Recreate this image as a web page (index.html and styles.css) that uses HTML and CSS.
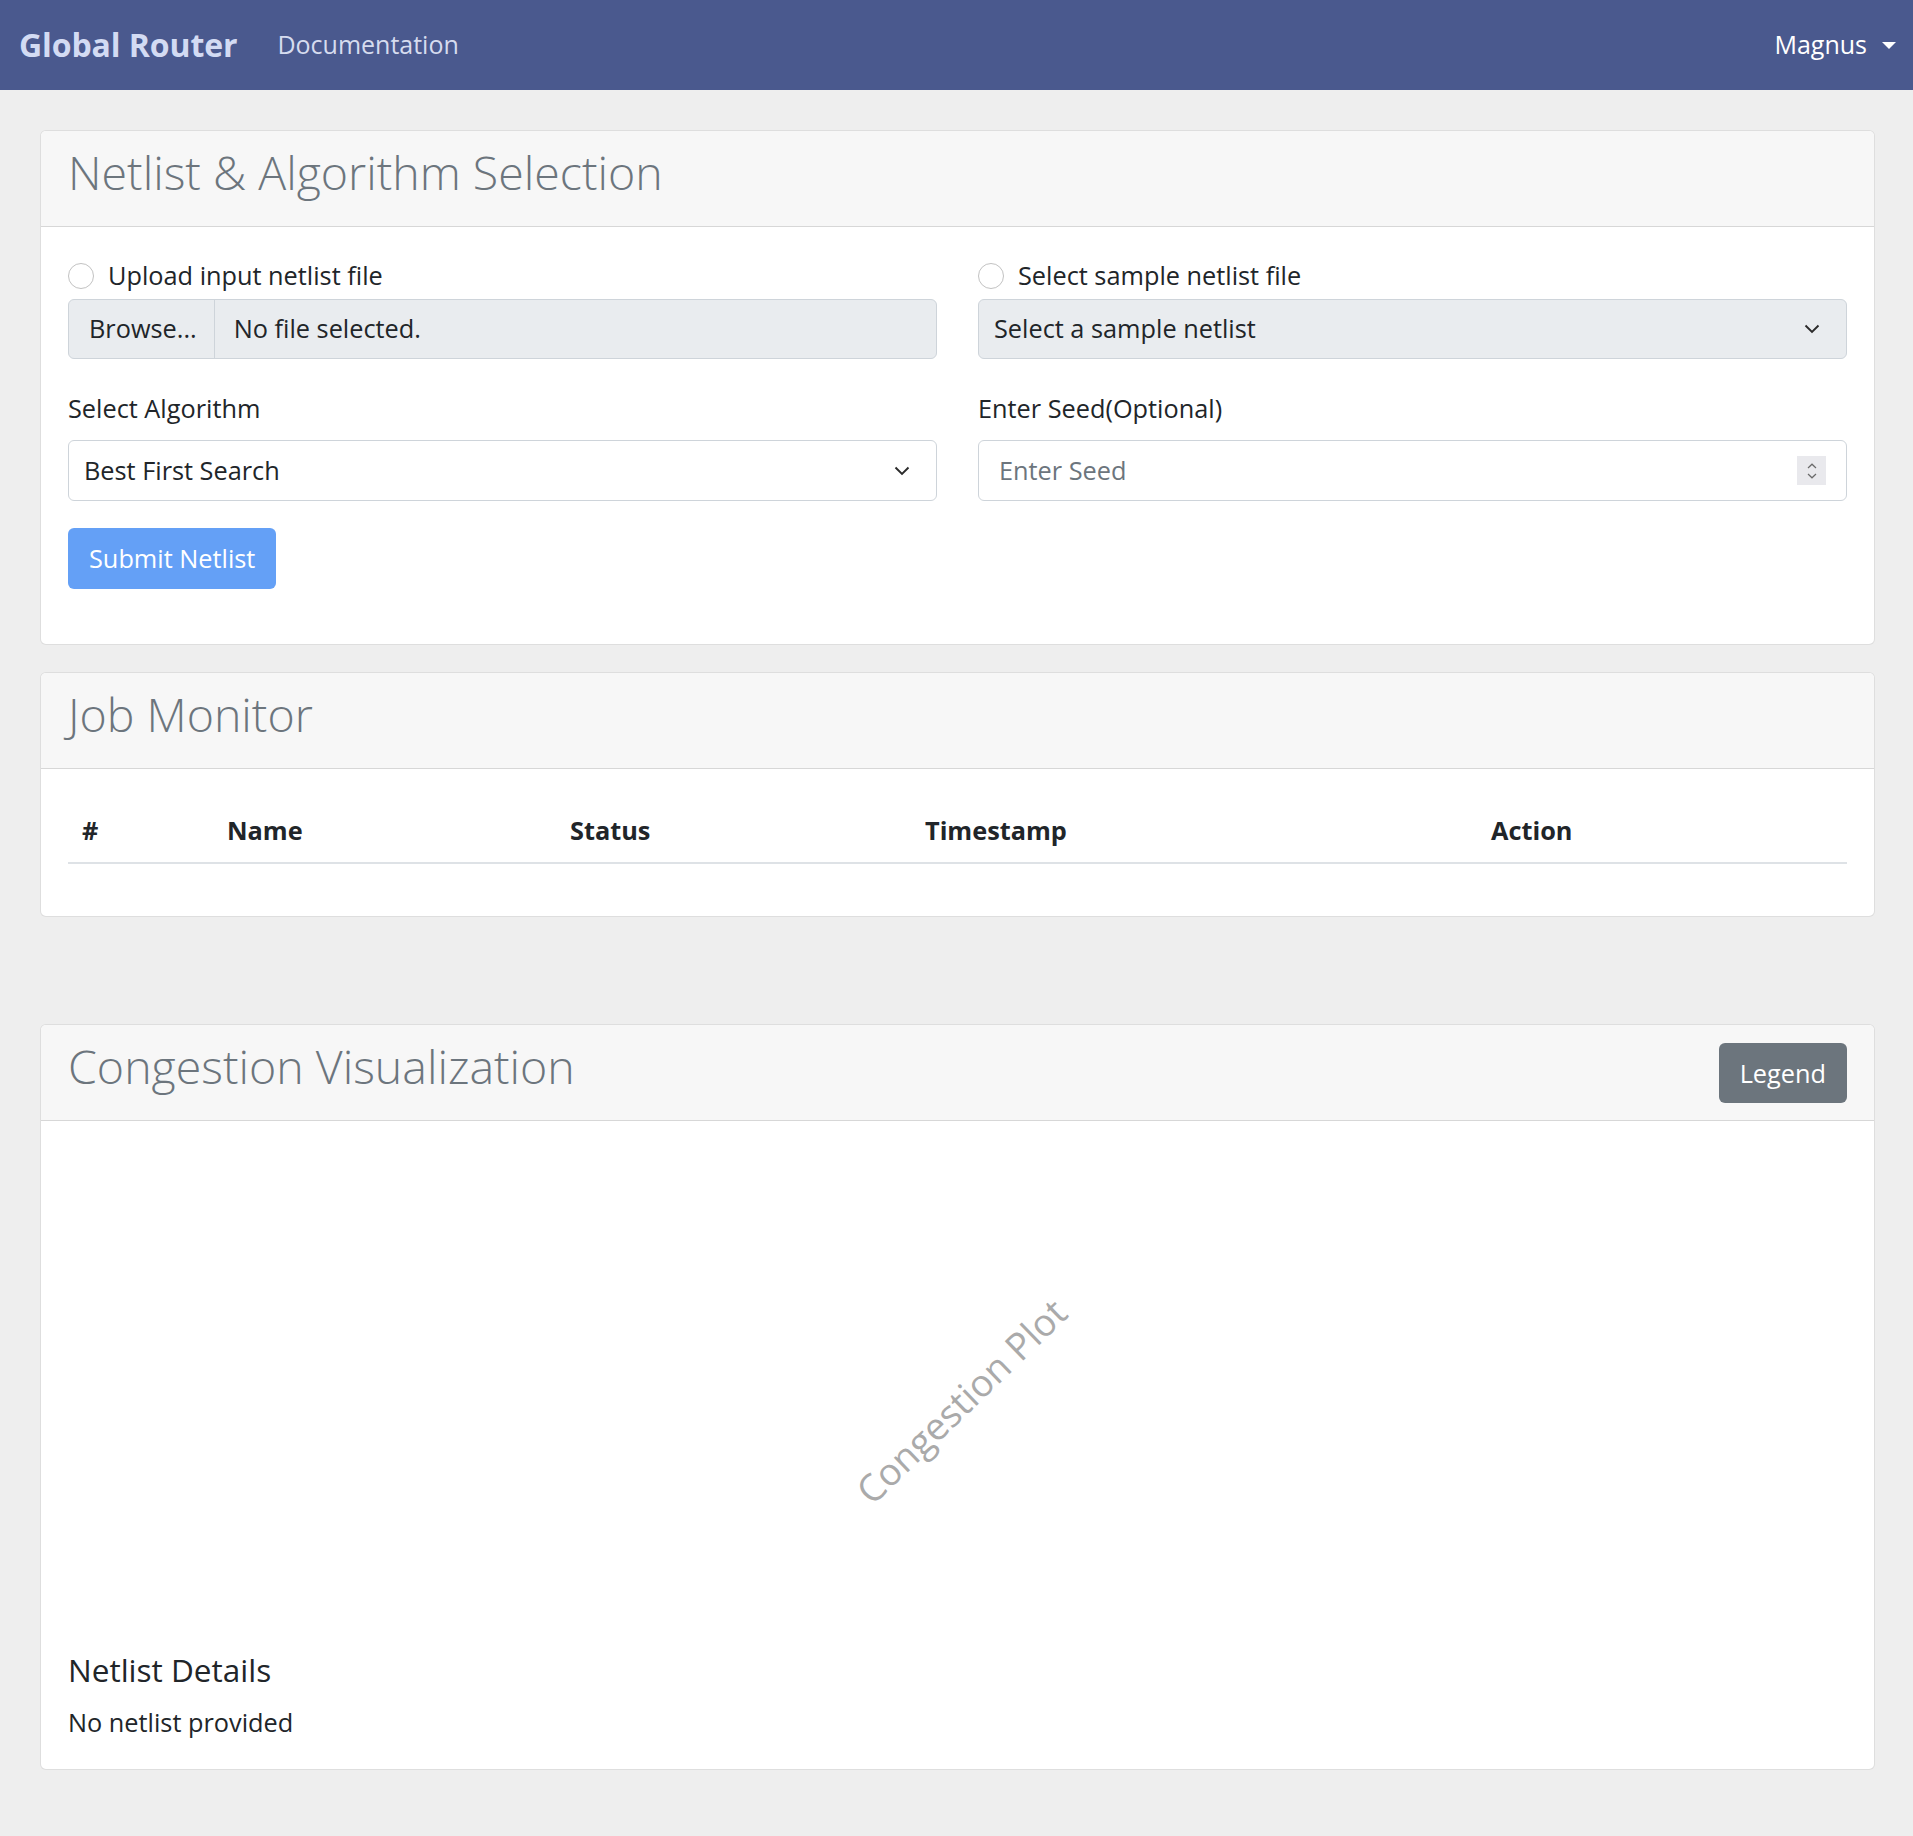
FILE: index.html
```html
<!DOCTYPE html>
<html lang="en">
<head>
<meta charset="utf-8">
<title>Global Router</title>
<link rel="stylesheet" href="styles.css">
</head>
<body>
<nav class="navbar">
  <a class="brand" href="#">Global Router</a>
  <a class="nav-link" href="#">Documentation</a>
  <div class="nav-spacer"></div>
  <a class="user-menu" href="#">Magnus<span class="caret"></span></a>
</nav>

<main class="page">
  <section class="card">
    <header class="card-header">
      <h2 class="card-title">Netlist &amp; Algorithm Selection</h2>
    </header>
    <div class="card-body">
      <form class="form-grid">
        <div class="form-col">
          <label class="radio-row"><span class="radio"></span>Upload input netlist file</label>
          <div class="file-input">
            <span class="file-btn">Browse...</span>
            <span class="file-name">No file selected.</span>
          </div>
          <label class="field-label">Select Algorithm</label>
          <div class="select">
            <span>Best First Search</span>
            <svg class="chevron" width="16" height="10" viewBox="0 0 16 10"><path d="M1.5 1.5 L8 8 L14.5 1.5" fill="none" stroke="#2b2b2b" stroke-width="1.9"/></svg>
          </div>
          <div class="actions"><button type="button" class="btn btn-submit">Submit Netlist</button></div>
        </div>
        <div class="form-col">
          <label class="radio-row"><span class="radio"></span>Select sample netlist file</label>
          <div class="select select-disabled">
            <span>Select a sample netlist</span>
            <svg class="chevron" width="16" height="10" viewBox="0 0 16 10"><path d="M1.5 1.5 L8 8 L14.5 1.5" fill="none" stroke="#2b2b2b" stroke-width="1.9"/></svg>
          </div>
          <label class="field-label">Enter Seed(Optional)</label>
          <div class="text-input">
            <span class="placeholder">Enter Seed</span>
            <span class="spinner">
              <svg width="10" height="6" viewBox="0 0 10 6"><path d="M1 5 L5 1.2 L9 5" fill="none" stroke="#6a6a6a" stroke-width="1.2"/></svg>
              <svg width="10" height="6" viewBox="0 0 10 6"><path d="M1 1 L5 4.8 L9 1" fill="none" stroke="#6a6a6a" stroke-width="1.2"/></svg>
            </span>
          </div>
        </div>
      </form>
    </div>
  </section>

  <section class="card card-jobs">
    <header class="card-header">
      <h2 class="card-title">Job Monitor</h2>
    </header>
    <div class="card-body">
      <table class="table">
        <thead>
          <tr>
            <th class="c-num">#</th>
            <th class="c-name">Name</th>
            <th class="c-status">Status</th>
            <th class="c-time">Timestamp</th>
            <th class="c-action">Action</th>
          </tr>
        </thead>
        <tbody></tbody>
      </table>
    </div>
  </section>

  <section class="card card-viz">
    <header class="card-header card-header-flex">
      <h2 class="card-title">Congestion Visualization</h2>
      <button type="button" class="btn btn-legend">Legend</button>
    </header>
    <div class="card-body">
      <div class="plot"><span class="plot-label">Congestion Plot</span></div>
      <h5 class="details-title">Netlist Details</h5>
      <p class="details-text">No netlist provided</p>
    </div>
  </section>
</main>
</body>
</html>
```

FILE: styles.css
```css
* { box-sizing: border-box; }

html, body {
  margin: 0;
  padding: 0;
}

body {
  background: #eeeeee;
  font-family: "Open Sans", "Noto Sans", "Liberation Sans", sans-serif;
  font-size: 25.3px;
  line-height: 1.5;
  color: #212529;
}

a { text-decoration: none; }

/* Navbar */
.navbar {
  height: 90px;
  background: #4a598e;
  display: flex;
  align-items: center;
  padding: 0 17px 0 19px;
}

.brand {
  font-size: 32px;
  font-weight: 700;
  color: #d3dbf3;
  letter-spacing: -0.1px;
}

.nav-link {
  margin-left: 40px;
  color: #d6dcef;
  font-size: 25px;
}

.nav-spacer { flex: 1; }

.user-menu {
  color: #ffffff;
  display: flex;
  align-items: center;
  font-size: 25px;
}

.caret {
  display: inline-block;
  margin-left: 15px;
  width: 0;
  height: 0;
  border-left: 7.5px solid transparent;
  border-right: 7.5px solid transparent;
  border-top: 7.5px solid #ffffff;
}

/* Page */
.page {
  padding: 40px 38px 40px 40px;
}

.card {
  background: #ffffff;
  border: 1px solid rgba(0, 0, 0, 0.13);
  border-radius: 6px;
  overflow: hidden;
}

.card-jobs { margin-top: 27px; }
.card-viz { margin-top: 106.5px; }

.card-header {
  background: #f7f7f7;
  border-bottom: 1px solid rgba(0, 0, 0, 0.13);
  height: 96px;
  padding: 14px 27px 0 27px;
}

.card-header-flex {
  display: flex;
  justify-content: space-between;
  align-items: flex-start;
}

.card-title {
  margin: 0;
  font-size: 46.5px;
  font-weight: 300;
  line-height: 54px;
  color: #6c757d;
}

.card-body {
  padding: 30px 27px 27px 27px;
}

/* Form */
.form-grid {
  display: grid;
  grid-template-columns: 1fr 1fr;
  column-gap: 41px;
  margin: 0 0 28px 0;
}

.form-col {
  display: flex;
  flex-direction: column;
}

.radio-row {
  display: flex;
  align-items: center;
  height: 38px;
  margin-bottom: 4px;
}

.radio {
  width: 26px;
  height: 26px;
  border-radius: 50%;
  border: 1.5px solid #c2c2c2;
  background: #fff;
  margin-right: 14px;
  flex: none;
}

.file-input {
  height: 60px;
  display: flex;
  align-items: stretch;
  background: #e9ecef;
  border: 1px solid #ced4da;
  border-radius: 6px;
}

.file-btn {
  display: flex;
  align-items: center;
  padding: 0 17px 0 20px;
  border-right: 1px solid #ced4da;
}

.file-name {
  display: flex;
  align-items: center;
  padding-left: 19px;
}

.field-label {
  margin-top: 30px;
  margin-bottom: 13px;
  height: 38px;
  line-height: 38px;
}

.select,
.text-input {
  height: 61px;
  display: flex;
  align-items: center;
  justify-content: space-between;
  border: 1px solid #ced4da;
  border-radius: 6px;
  background: #fff;
  padding: 0 26px 0 15px;
}

.select-disabled {
  height: 60px;
  background: #e9ecef;
}

.chevron { flex: none; }

.text-input {
  padding: 0 20px 0 20px;
}

.placeholder { color: #6c757d; }

.spinner {
  width: 29px;
  height: 29px;
  background: #e9e9ed;
  display: flex;
  flex-direction: column;
  align-items: center;
  justify-content: center;
  gap: 4px;
}

.spinner svg { display: block; }

.actions {
  margin-top: 27px;
}

.btn {
  font-family: inherit;
  font-size: 25.3px;
  line-height: 38px;
  border: 0;
  border-radius: 6px;
  color: #ffffff;
  cursor: pointer;
}

.btn-submit {
  background: #64a0f6;
  padding: 11px 21px 12px;
}

.btn-legend {
  background: #6c757d;
  padding: 11px 21px;
  margin-top: 4px;
}

/* Table */
.table {
  width: 100%;
  border-collapse: collapse;
  margin-bottom: 25px;
}

.table th {
  text-align: left;
  font-weight: 700;
  padding: 13px 14px 12.5px;
  line-height: 37.5px;
  border-bottom: 2px solid #dee2e6;
}

.c-num { width: 145px; }
.c-name { width: 343px; }
.c-status { width: 355px; }
.c-time { width: 566px; }

/* Visualization */
.plot {
  height: 500.5px;
  display: flex;
  align-items: center;
  justify-content: center;
  padding-left: 7px;
}

.plot-label {
  font-size: 37.5px;
  color: #aaaaaa;
  transform: rotate(-44deg);
  white-space: nowrap;
}

.details-title {
  margin: 0 0 16px 0;
  font-size: 31.5px;
  font-weight: 400;
  line-height: 37px;
}

.details-text {
  margin: 0;
}
```
